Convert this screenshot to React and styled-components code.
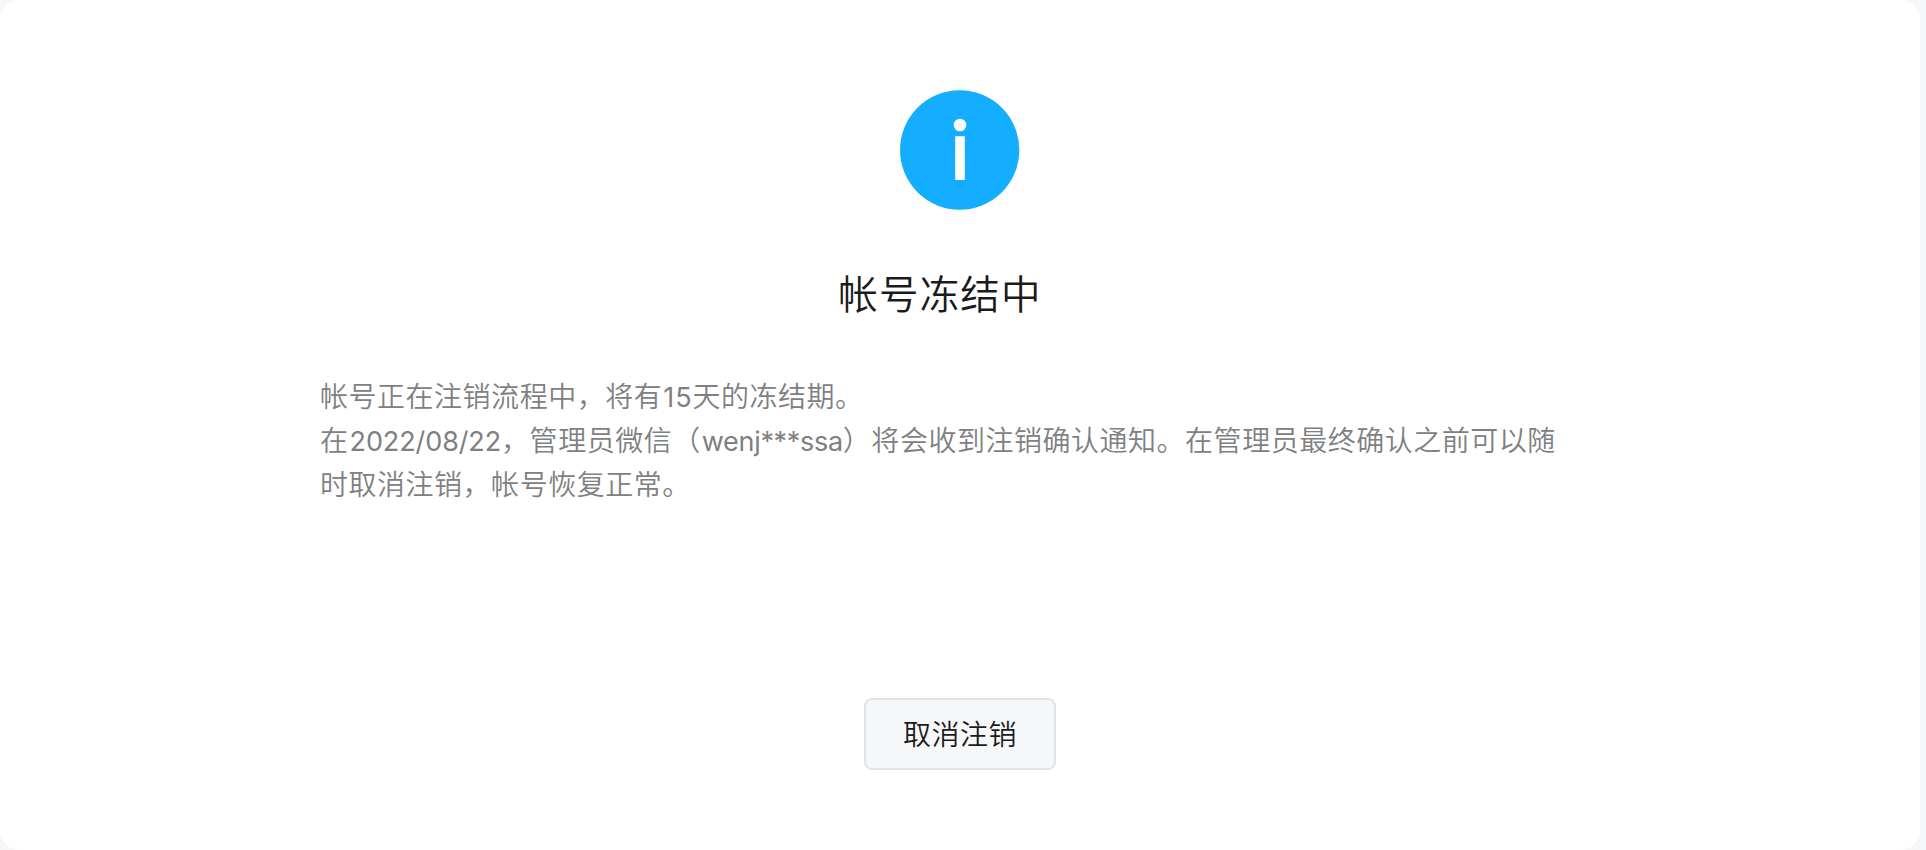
import React from "react"
import styled, { createGlobalStyle } from "styled-components"

const GlobalStyle = createGlobalStyle`
  body {
    margin: 0;
    background: #f6f7f9;
    font-family: Inter, "Noto Sans CJK SC", sans-serif;
  }
`

const Card = styled.main`
  display: flex;
  flex-direction: column;
  align-items: center;
  box-sizing: border-box;
  width: 1920px;
  height: 850px;
  padding-top: 90px;
  border-radius: 20px;
  background: #fff;
`

const StatusIcon = styled.svg`
  display: block;
  width: 120px;
  height: 120px;
`

const Title = styled.h1`
  margin: 52px 0 0;
  padding-right: 40px;
  color: #1a1b1c;
  font-family: "Noto Sans CJK SC", sans-serif;
  font-size: 39.5px;
  font-weight: 350;
  line-height: 60px;
  letter-spacing: 1.2px;
`

const Description = styled.p`
  width: 1280px;
  margin: 53px 0 0;
  color: #7e8081;
  font-size: 28px;
  font-weight: 350;
  line-height: 44px;
  letter-spacing: 0.52px;
  white-space: nowrap;
`

const Latin = styled.span`
  padding-left: 1px;
  font-size: 27px;
  font-weight: 380;
  line-height: 1;
  letter-spacing: ${props => props.$spacing || "-0.1px"};
`

const Button = styled.button`
  box-sizing: border-box;
  width: 192px;
  height: 72px;
  margin-top: 191px;
  padding: 0 0 2px;
  border: 2px solid #e2e3e5;
  border-radius: 8px;
  background: #f6f7f9;
  color: #1a1b1c;
  font-family: "Noto Sans CJK SC", sans-serif;
  font-size: 28px;
  font-weight: 350;
  line-height: 40px;
  letter-spacing: 0.5px;
`

const InfoIcon = () => (
  <StatusIcon viewBox="0 0 120 120" aria-hidden="true">
    <circle cx="59.7" cy="60" r="59.7" fill="#14adff" />
    <circle cx="60" cy="35" r="6.3" fill="#fff" />
    <rect x="55.2" y="46.2" width="9.6" height="43.8" fill="#fff" />
  </StatusIcon>
)

const App = () => (
  <>
    <GlobalStyle />
    <Card>
      <InfoIcon />
      <Title>帐号冻结中</Title>
      <Description lang="zh-CN">
        帐号正在注销流程中，将有<Latin $spacing="0.9px">15</Latin>天的冻结期。
        <br />
        在<Latin>2022/08/22</Latin>，管理员微信（
        <Latin $spacing="-0.3px">wenj***ssa</Latin>
        ）将会收到注销确认通知。在管理员最终确认之前可以随
        <br />
        时取消注销，帐号恢复正常。
      </Description>
      <Button type="button">取消注销</Button>
    </Card>
  </>
)

export default App
